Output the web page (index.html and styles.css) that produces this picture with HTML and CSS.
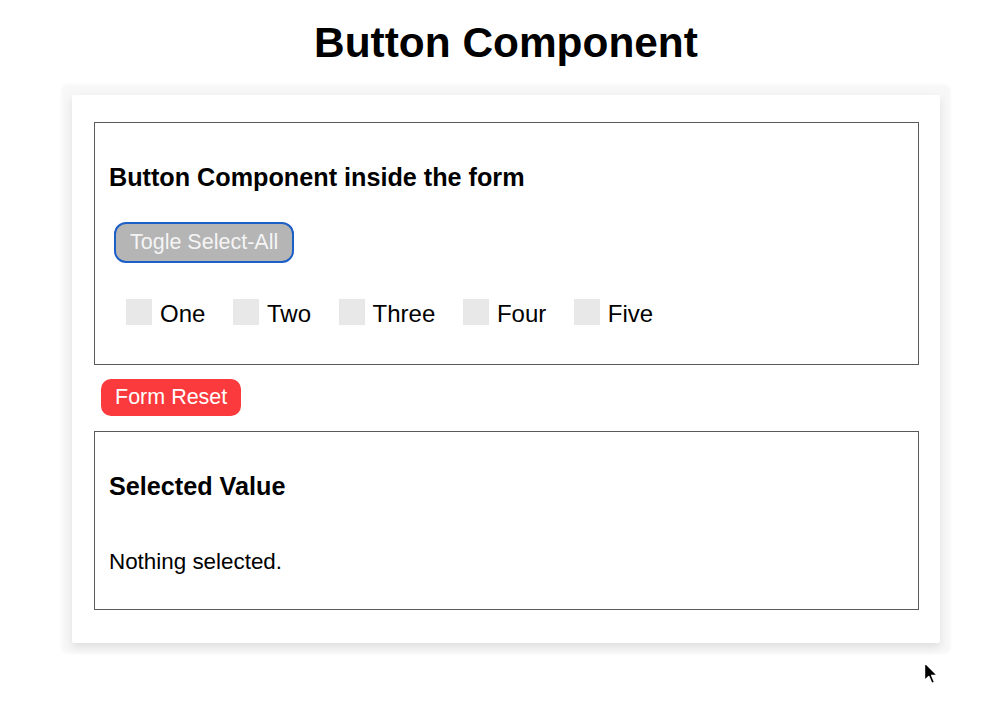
FILE: index.html
```html
<!DOCTYPE html>
<html>
<head>
<meta charset="utf-8">
<link rel="stylesheet" href="styles.css">
</head>
<body>
<h1 class="title">Button Component</h1>
<div class="card">
  <form class="box box-form">
    <h2 class="box-heading">Button Component inside the form</h2>
    <div class="toggle-row">
      <button type="button" class="btn btn-toggle">Togle Select-All</button>
    </div>
    <div class="checks">
      <label class="check"><span class="check-box"></span><span class="check-label">One</span></label>
      <label class="check"><span class="check-box"></span><span class="check-label">Two</span></label>
      <label class="check"><span class="check-box"></span><span class="check-label">Three</span></label>
      <label class="check"><span class="check-box"></span><span class="check-label">Four</span></label>
      <label class="check"><span class="check-box"></span><span class="check-label">Five</span></label>
    </div>
  </form>
  <div class="reset-row">
    <button type="button" class="btn btn-reset">Form Reset</button>
  </div>
  <div class="box box-value">
    <h2 class="box-heading heading-value">Selected Value</h2>
    <p class="value-text">Nothing selected.</p>
  </div>
</div>
<svg class="cursor" width="16" height="26" viewBox="0 0 16 26">
  <path d="M1.5 1.5 L1.5 19.5 L5.8 15.4 L8.8 22.5 L11.6 21.3 L8.7 14.4 L14.5 14.4 Z" fill="#000" stroke="#fff" stroke-width="1.4" stroke-linejoin="round"/>
</svg>
</body>
</html>
```

FILE: styles.css
```css
html, body {
  margin: 0;
  padding: 0;
  background: #ffffff;
}

body {
  font-family: "Liberation Sans", Arial, Helvetica, sans-serif;
  color: #000;
  width: 1000px;
  height: 709px;
  overflow: hidden;
  position: relative;
}

.title {
  margin: 19px 0 0;
  padding-left: 12px;
  font-size: 42.4px;
  line-height: 48px;
  font-weight: bold;
  text-align: center;
}

.card {
  margin: 28px 0 0 72px;
  width: 868px;
  height: 548px;
  box-sizing: border-box;
  padding: 27px 21px 0 22px;
  background: #fff;
  border-radius: 2px;
  box-shadow: 0 4px 10px rgba(0, 0, 0, 0.10), 0 0 3px 11px rgba(0, 0, 0, 0.03);
  display: flex;
  flex-direction: column;
}

.box {
  border: 1px solid #5a5a5a;
  padding: 0 14px;
  margin: 0;
}

.box-heading {
  margin: 40px 0 0;
  font-size: 25.2px;
  line-height: 29px;
  font-weight: bold;
}

.box-form {
  padding-bottom: 38px;
}

.toggle-row {
  margin-top: 30px;
  display: flex;
}

.btn {
  font-family: "Liberation Sans", Arial, Helvetica, sans-serif;
  font-size: 21.5px;
  color: #fff;
  cursor: pointer;
}

.btn-toggle {
  margin-left: 5px;
  height: 41px;
  padding: 0 14px;
  background: #b5b5b5;
  border: 2px solid #1c5fc7;
  border-radius: 12px;
  color: #f4f4f4;
}

.checks {
  margin-top: 35px;
  margin-left: 17px;
  display: flex;
  align-items: center;
  gap: 27.6px;
}

.check {
  display: flex;
  align-items: center;
  gap: 8px;
  height: 28px;
}

.check-box {
  width: 26px;
  height: 26px;
  background: #e8e8e8;
}

.check-label {
  font-size: 24px;
  line-height: 28px;
  margin-top: 4px;
}

.reset-row {
  margin-top: 14px;
  display: flex;
}

.btn-reset {
  margin-left: 7px;
  height: 37px;
  padding: 0 14px;
  background: #fa3a3c;
  border: none;
  border-radius: 10px;
}

.box-value {
  margin-top: 15px;
  padding-bottom: 34px;
}

.heading-value {
  margin-top: 40px;
}

.value-text {
  margin: 48px 0 0;
  font-size: 22.4px;
  line-height: 26px;
}

.cursor {
  position: absolute;
  left: 923px;
  top: 661px;
}
```
